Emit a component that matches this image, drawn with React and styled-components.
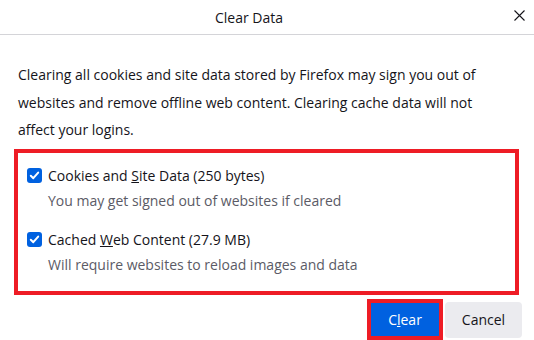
import styled, { createGlobalStyle } from "styled-components";

const GlobalStyle = createGlobalStyle`
  body {
    margin: 0;
    background: #ffffff;
    font-family: "Open Sans", "Noto Sans", sans-serif;
    color: #15141a;
  }
`;

const Dialog = styled.div`
  width: 534px;
  height: 340px;
  display: flex;
  flex-direction: column;
  overflow: hidden;
`;

const Header = styled.div`
  display: flex;
  align-items: center;
  height: 34px;
  border-bottom: 1px solid #d4d4d8;
`;

const Title = styled.div`
  flex: 1;
  text-align: center;
  font-size: 14px;
`;

const CloseButton = styled.div`
  width: 36px;
  display: flex;
  justify-content: flex-end;
  padding-right: 9px;
  box-sizing: border-box;
  margin-top: -3px;
`;

const Intro = styled.p`
  margin: 26px 0 0 18px;
  max-width: 465px;
  font-size: 14px;
  line-height: 27.5px;
`;

const Highlight = styled.div`
  margin: 5px 15px 0 14px;
  border: 4px solid #ee1c25;
  padding: 12px 9px;
  display: flex;
  flex-direction: column;
  gap: 14px;
`;

const Option = styled.div`
  display: grid;
  grid-template-columns: 15px 1fr;
  column-gap: 6px;
  align-items: center;
`;

const Box = styled.span`
  width: 15px;
  height: 15px;
  border-radius: 3px;
  background: #0061e0;
  display: flex;
  align-items: center;
  justify-content: center;
`;

const Label = styled.div`
  font-size: 14px;
  line-height: 22px;
`;

const Description = styled.div`
  grid-column: 2;
  font-size: 14px;
  line-height: 28px;
  color: #5b5b66;
`;

const Footer = styled.div`
  display: flex;
  justify-content: flex-end;
  align-items: center;
  gap: 6px;
  padding: 0 12px 0 0;
  margin-top: 7px;
`;

const Button = styled.div`
  display: flex;
  align-items: center;
  justify-content: center;
  font-size: 14px;
  width: ${(p) => (p.$primary ? "68px" : "77px")};
  height: ${(p) => (p.$primary ? "33px" : "36px")};
  background: ${(p) => (p.$primary ? "#0061e0" : "#ebebef")};
  color: ${(p) => (p.$primary ? "#ffffff" : "#15141a")};
  box-shadow: ${(p) => (p.$marked ? "0 0 0 4px #ee1c25" : "none")};
  border-radius: ${(p) => (p.$marked ? "0" : "4px")};
`;

function Check() {
  return (
    <Box>
      <svg width="11" height="11" viewBox="0 0 11 11">
        <path
          d="M1.8 5.8 L4.3 8.2 L9.2 2.6"
          fill="none"
          stroke="#ffffff"
          strokeWidth="2"
          strokeLinecap="round"
          strokeLinejoin="round"
        />
      </svg>
    </Box>
  );
}

export default function App() {
  return (
    <>
      <GlobalStyle />
      <Dialog>
        <Header>
          <Title>Clear Data</Title>
          <CloseButton>
            <svg width="11" height="11" viewBox="0 0 11 11">
              <path d="M0.5 0.5 L10.5 10.5 M10.5 0.5 L0.5 10.5" stroke="#15141a" strokeWidth="1.1" />
            </svg>
          </CloseButton>
        </Header>
        <Intro>
          Clearing all cookies and site data stored by Firefox may sign you out of websites and
          remove offline web content. Clearing cache data will not affect your logins.
        </Intro>
        <Highlight>
          <Option>
            <Check />
            <Label>
              Cookies and <u>S</u>ite Data (250 bytes)
            </Label>
            <Description>You may get signed out of websites if cleared</Description>
          </Option>
          <Option>
            <Check />
            <Label>
              Cached <u>W</u>eb Content (27.9 MB)
            </Label>
            <Description>Will require websites to reload images and data</Description>
          </Option>
        </Highlight>
        <Footer>
          <Button $primary $marked>
            <span>
              C<u>l</u>ear
            </span>
          </Button>
          <Button>Cancel</Button>
        </Footer>
      </Dialog>
    </>
  );
}
